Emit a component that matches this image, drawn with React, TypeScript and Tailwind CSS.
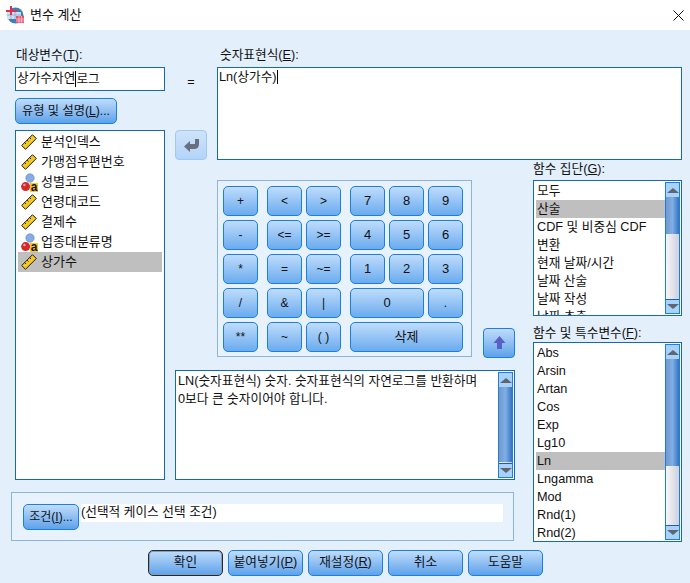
import React from "react";

const font = "[font-family:'Liberation_Sans','Noto_Sans_CJK_KR',sans-serif]";

function RulerIcon() {
  return (
    <svg width="16" height="16" viewBox="0 0 16 16" className="shrink-0" aria-hidden="true">
      <path d="M0.7 11.5 L11.5 0.7 L15.3 4.5 L4.5 15.3 Z" fill="#f7c81e" stroke="#1c1c1c" strokeWidth="1" />
      <path d="M3.5 8.5 L5 10 M6 6 L7.5 7.5 M8.5 3.5 L10 5" stroke="#1c1c1c" strokeWidth="0.9" />
    </svg>
  );
}

function NominalIcon() {
  return (
    <svg width="17" height="19" viewBox="0 0 17 19" className="shrink-0" aria-hidden="true">
      <circle cx="9" cy="5" r="4.2" fill="#85ade4" stroke="#5b84c0" strokeWidth="0.6" />
      <circle cx="4.6" cy="13.6" r="4.5" fill="#d42a2a" />
      <circle cx="3.4" cy="12" r="1.2" fill="#f0a0a0" />
      <rect x="9" y="10" width="8" height="9" fill="#f7c81e" />
      <text x="13" y="18" textAnchor="middle" fontSize="12" fontWeight="700" fontFamily="Liberation Sans" fill="#111">
        a
      </text>
    </svg>
  );
}

function AppIcon() {
  return (
    <svg width="18" height="18" viewBox="0 0 18 18" aria-hidden="true">
      <circle cx="9.5" cy="9.5" r="8" fill="#3f7fb8" />
      <rect x="1" y="6" width="14" height="7" fill="#cfe0f5" />
      <path d="M1 9 H15 M5 6 V13 M9 6 V13" stroke="#8fb0dc" strokeWidth="1" />
      <rect x="0" y="4" width="11" height="2" fill="#d8334a" />
      <rect x="4" y="0" width="2" height="9" fill="#d8334a" />
      <rect x="10" y="10" width="8" height="7" fill="#e8506a" />
      <path d="M10 13 H18 M10 15 H18 M13 10 V17 M15.5 10 V17" stroke="#f9c8d2" strokeWidth="0.8" />
    </svg>
  );
}

function Key({ label, wide, big, large }: { label: string; wide?: boolean; big?: boolean; large?: boolean }) {
  return (
    <button
      className={`h-[30px] ${big ? "w-[113px]" : wide ? "w-[74px]" : "w-[35px]"} ${large ? "text-[13px]" : "text-[12px]"} rounded-[5px] border border-[#1b7fdc] bg-gradient-to-b from-[#bfdcfb] to-[#6aabee] text-[#111] flex items-center justify-center`}
    >
      {label}
    </button>
  );
}

function Btn({ children, className }: { children: React.ReactNode; className?: string }) {
  return (
    <button
      className={`h-[26px] rounded-[5px] border bg-gradient-to-b from-[#bfdcfb] to-[#5da2ea] text-[#111] flex items-center justify-center whitespace-nowrap ${className ?? "border-[#1b7fdc]"}`}
    >
      {children}
    </button>
  );
}

function ScrollBar({ thumb }: { thumb: string }) {
  return (
    <div className="w-[15px] mr-px my-px shrink-0 flex flex-col border border-[#1b7fdc] bg-gradient-to-r from-[#f6f6fa] to-[#d0d0de]">
      <div className="h-[14px] shrink-0 bg-[#a9d2fb] flex items-center justify-center">
        <div className="w-0 h-0 border-x-[6px] border-x-transparent border-b-[5px] border-b-[#5f6670]" />
      </div>
      <div className={`${thumb} w-full bg-gradient-to-r from-[#7199cc] via-[#80aee6] to-[#3473c2] shrink-0`} />
      <div className="flex-1" />
      <div className="h-[14px] shrink-0 border-t border-[#1b5fa8] bg-[#a9d2fb] flex items-center justify-center">
        <div className="w-0 h-0 border-x-[6px] border-x-transparent border-t-[5px] border-t-[#5f6670]" />
      </div>
    </div>
  );
}

function ListBox({
  items,
  selected,
  thumb,
  height,
}: {
  items: string[];
  selected: string;
  thumb: string;
  height: string;
}) {
  return (
    <div className={`${height} border border-[#1668b8] bg-white flex overflow-hidden`}>
      <div className="flex-1 pl-[2px] pt-[1px] overflow-hidden">
        {items.map((item) => (
          <div
            key={item}
            className={`h-[18px] pl-[1px] leading-[18px] text-[#111] whitespace-nowrap ${item === selected ? "bg-[#bfbfbf]" : ""}`}
          >
            {item}
          </div>
        ))}
      </div>
      <ScrollBar thumb={thumb} />
    </div>
  );
}

const variables: [string, "scale" | "nominal"][] = [
  ["분석인덱스", "scale"],
  ["가맹점우편번호", "scale"],
  ["성별코드", "nominal"],
  ["연령대코드", "scale"],
  ["결제수", "scale"],
  ["업종대분류명", "nominal"],
  ["상가수", "scale"],
];

export default function App() {
  return (
    <div className={`w-[690px] h-[583px] bg-[#e3effb] text-[12.7px] text-[#111] overflow-hidden ${font}`}>
      <div className="h-[30px] bg-white flex items-center pl-[6px] pr-[5px]">
        <AppIcon />
        <span className="ml-[6px] text-[13px]">변수 계산</span>
        <svg width="11" height="11" viewBox="0 0 11 11" className="ml-auto mr-[1px]" aria-hidden="true">
          <path d="M0.5 0.5 L10.5 10.5 M10.5 0.5 L0.5 10.5" stroke="#111" strokeWidth="1" />
        </svg>
      </div>

      <div className="flex pl-[15px] pt-[18px]">
        <div className="w-[150px] shrink-0">
          <div className="h-[19px] pl-px leading-[15px]">
            대상변수(<u>T</u>):
          </div>
          <div className="h-[24px] border border-[#1668b8] bg-white flex items-center pl-[1px]">
            상가수자연<span className="border-l border-black h-[16px] leading-[16px]">로그</span>
          </div>
          <Btn className="mt-[7px] w-[102px] text-[12.2px] border-[#1b7fdc]">
            유형 및 설명(<u>L</u>)...
          </Btn>
          <div className="mt-[6px] h-[350px] border border-[#1668b8] bg-white pt-[1px] px-[2px] text-[13px]">
            {variables.map(([name, kind]) => (
              <div
                key={name}
                className={`h-[20px] flex items-center gap-[4px] pl-[3px] ${name === "상가수" ? "bg-[#bfbfbf]" : ""}`}
              >
                {kind === "scale" ? <RulerIcon /> : <NominalIcon />}
                <span className={kind === "scale" ? "" : "-ml-px"}>{name}</span>
              </div>
            ))}
          </div>
        </div>

        <div className="ml-[10px] w-[507px] shrink-0">
          <div className="flex h-[112px]">
            <div className="w-[32px] flex flex-col items-center">
              <span className="mt-[25px]">=</span>
              <div className="mt-auto w-[32px] h-[30px] rounded-[4px] border border-[#9cc9f5] bg-gradient-to-b from-[#cfe3fa] to-[#b3d4f8] flex items-center justify-center">
                <svg width="15" height="13" viewBox="0 0 15 13" aria-hidden="true">
                  <path d="M0 7.5 L6 2 V5 H11 V0 H15 V5 Q15 10 10 10 H6 V13 Z" fill="#66707e" />
                </svg>
              </div>
            </div>
            <div className="ml-[10px] flex-1 flex flex-col">
              <div className="h-[19px] pl-[3px] leading-[15px]">
                숫자표현식(<u>E</u>):
              </div>
              <div className="flex-1 border border-[#1668b8] bg-white pl-[1px] pt-[1px] leading-[16px]">
                Ln(상가수)<span className="border-l border-black" />
              </div>
            </div>
          </div>

          <div className="flex">
            <div className="w-[340px] shrink-0">
              <div className="flex items-end mt-[20px] ml-[42px]">
                <div className="w-[255px] h-[177px] border border-[#8fb4dc] bg-[#e7f2fd] pl-[5px] pt-[5px] flex gap-[9px] shrink-0">
                  <div className="flex flex-col gap-[4px]">
                    {["+", "-", "*", "/", "**"].map((k) => (
                      <Key key={k} label={k} />
                    ))}
                  </div>
                  <div className="grid grid-cols-2 gap-[4px] h-fit">
                    {["<", ">", "<=", ">=", "=", "~=", "&", "|", "~", "( )"].map((k) => (
                      <Key key={k} label={k} />
                    ))}
                  </div>
                  <div className="grid grid-cols-3 gap-[4px] h-fit">
                    {["7", "8", "9", "4", "5", "6", "1", "2", "3"].map((k) => (
                      <Key key={k} label={k} large />
                    ))}
                    <div className="col-span-2">
                      <Key label="0" wide large />
                    </div>
                    <Key label="." />
                    <div className="col-span-3">
                      <Key label="삭제" big large />
                    </div>
                  </div>
                </div>
                <div className="ml-[11px] w-[32px] h-[30px] mb-[-1px] rounded-[4px] border border-[#1b7fdc] bg-gradient-to-b from-[#bfdcfb] to-[#5da2ea] flex items-center justify-center shrink-0">
                  <svg width="13" height="14" viewBox="0 0 13 14" aria-hidden="true">
                    <path d="M6.5 0 L12.5 7 H9 V13 H4 V7 H0.5 Z" fill="#5a5fc8" />
                  </svg>
                </div>
              </div>

              <div className="mt-[13px] h-[110px] border border-[#1668b8] bg-white flex">
                <div className="flex-1 pl-[2px] pt-[1px] leading-[18px]">
                  LN(숫자표현식) 숫자. 숫자표현식의 자연로그를 반환하며
                  <br />
                  0보다 큰 숫자이어야 합니다.
                </div>
                <ScrollBar thumb="h-[75px]" />
              </div>
            </div>

            <div className="ml-[18px] w-[149px] shrink-0">
              <div className="h-[20px] leading-[18px]">
                함수 집단(<u>G</u>):
              </div>
              <ListBox
                height="h-[136px]"
                thumb="h-[37px]"
                selected="산술"
                items={["모두", "산술", "CDF 및 비중심 CDF", "변환", "현재 날짜/시간", "날짜 산술", "날짜 작성", "날짜 추출"]}
              />
              <div className="mt-[9px] h-[17px] leading-[16px]">
                함수 및 특수변수(<u>F</u>):
              </div>
              <ListBox
                height="h-[200px]"
                thumb="h-[107px]"
                selected="Ln"
                items={["Abs", "Arsin", "Artan", "Cos", "Exp", "Lg10", "Ln", "Lngamma", "Mod", "Rnd(1)", "Rnd(2)"]}
              />
            </div>
          </div>
        </div>
      </div>

      <div className="flex">
        <div className="-mt-[50px] ml-[11px] w-[503px] h-[49px] border border-[#8fb4dc] bg-[#e7f2fd] flex items-start pt-[11px] pl-[11px]">
          <Btn className="w-[56px] text-[12px] border-[#1b7fdc]">
            조건(<u>I</u>)...
          </Btn>
          <div className="ml-[2px] w-[422px] h-[18px] bg-white leading-[16px]">(선택적 케이스 선택 조건)</div>
        </div>
      </div>

      <div className="flex gap-[5px] pl-[148px] mt-[8px]">
        <Btn className="w-[75px] border-[#2a2a2a] shadow-[inset_0_0_0_1px_#7d9fc6]">확인</Btn>
        <Btn className="w-[75px] border-[#1b7fdc]">
          붙여넣기(<u>P</u>)
        </Btn>
        <Btn className="w-[75px] border-[#1b7fdc]">
          재설정(<u>R</u>)
        </Btn>
        <Btn className="w-[75px] border-[#1b7fdc]">취소</Btn>
        <Btn className="w-[75px] border-[#1b7fdc]">도움말</Btn>
      </div>
    </div>
  );
}
